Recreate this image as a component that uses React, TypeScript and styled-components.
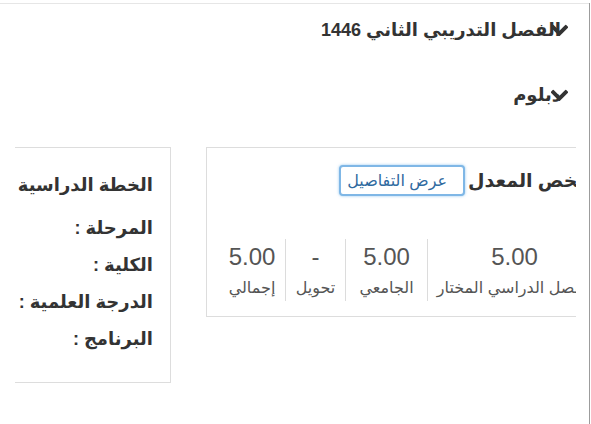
import React from "react";
import styled, { createGlobalStyle } from "styled-components";

const GlobalStyle = createGlobalStyle`
  html, body {
    margin: 0;
    padding: 0;
    background: #ffffff;
  }
  body {
    font-family: "Liberation Sans", "DejaVu Sans", sans-serif;
    color: #333333;
  }
  * { box-sizing: border-box; }
`;

const Frame = styled.div`
  width: 590px;
  height: 424px;
  border-right: 1px solid #9c9c9c;
`;

const Inner = styled.div`
  margin-top: 3px;
  border-top: 1px solid #e6e6e6;
  height: 421px;
`;

const Viewport = styled.div`
  direction: rtl;
  margin-left: 15px;
  width: 561px;
  height: 420px;
  overflow: hidden;
`;

const Section = styled.div<{ $top: number }>`
  display: flex;
  align-items: center;
  height: 22px;
  margin-top: ${(p) => p.$top}px;
  padding-right: 8px;
`;

const Chevron = styled.svg`
  position: relative;
  z-index: 1;
  width: 17px;
  height: 12px;
  flex-shrink: 0;
  fill: #333333;
`;

const SectionTitle = styled.span`
  font-size: 18px;
  font-weight: bold;
  color: #333333;
  line-height: 22px;
  margin-right: -10px;
  white-space: nowrap;
`;

const CardsRow = styled.div`
  display: flex;
  align-items: flex-start;
  gap: 35px;
  margin-top: 41px;
`;

const SummaryCard = styled.div`
  flex-shrink: 0;
  width: 400px;
  height: 170px;
  margin-right: -30px;
  border: 1px solid #dddddd;
  background: #ffffff;
`;

const SummaryHeader = styled.div`
  display: flex;
  align-items: center;
  gap: 3px;
  margin-top: 17px;
  padding-right: 8px;
  height: 31px;
`;

const SummaryTitle = styled.span`
  font-size: 19px;
  font-weight: bold;
  color: #333333;
  white-space: nowrap;
`;

const DetailsButton = styled.button`
  direction: rtl;
  height: 31px;
  padding: 0 16px 0 6px;
  border: 2px solid #7fb7e6;
  border-radius: 4px;
  box-shadow: 0 0 3px rgba(102, 175, 233, 0.7);
  background: #ffffff;
  color: #2f6aa0;
  font-family: "Liberation Sans", "DejaVu Sans", sans-serif;
  font-size: 16px;
  white-space: nowrap;
  cursor: pointer;
`;

const StatsRow = styled.div`
  display: flex;
  margin-top: 43px;
  padding-right: 4px;
`;

const Stat = styled.div<{ $w: number; $last?: boolean }>`
  width: ${(p) => p.$w}px;
  flex-shrink: 0;
  text-align: center;
  border-left: ${(p) => (p.$last ? "none" : "1px solid #dcdcdc")};
  padding-bottom: 3px;
`;

const StatValue = styled.div`
  margin-top: 6px;
  font-size: 24px;
  line-height: 24px;
  color: #555555;
  direction: ltr;
`;

const StatLabel = styled.div`
  margin-top: 9px;
  font-size: 16px;
  line-height: 20px;
  color: #555555;
  white-space: nowrap;
`;

const PlanCard = styled.div`
  flex-shrink: 0;
  width: 180px;
  height: 236px;
  border: 1px solid #dddddd;
  padding: 26px 17px 0 0;
`;

const PlanTitle = styled.div`
  font-size: 18px;
  font-weight: bold;
  line-height: 22px;
  color: #333333;
  white-space: nowrap;
`;

const PlanList = styled.div`
  display: flex;
  flex-direction: column;
  gap: 15px;
  margin-top: 21px;
`;

const PlanItem = styled.div`
  font-size: 18px;
  font-weight: bold;
  line-height: 22px;
  color: #333333;
  white-space: nowrap;
`;

const ChevronIcon = () => (
  <Chevron viewBox="115 470 1568 1100" aria-hidden="true">
    <path d="M1683 808l-742 741q-19 19-45 19t-45-19l-742-741q-19-19-19-45.5t19-45.5l166-165q19-19 45-19t45 19l531 531 531-531q19-19 45-19t45 19l166 165q19 19 19 45.5t-19 45.5z" />
  </Chevron>
);

const stats = [
  { value: "5.00", label: "الفصل الدراسي المختار", w: 174 },
  { value: "5.00", label: "الجامعي", w: 82 },
  { value: "-", label: "تحويل", w: 60 },
  { value: "5.00", label: "إجمالي", w: 66 },
];

const planItems = ["المرحلة :", "الكلية :", "الدرجة العلمية :", "البرنامج :"];

export default function App() {
  return (
    <>
      <GlobalStyle />
      <Frame>
        <Inner>
          <Viewport>
            <Section $top={15}>
              <ChevronIcon />
              <SectionTitle>الفصل التدريبي الثاني 1446</SectionTitle>
            </Section>
            <Section $top={43}>
              <ChevronIcon />
              <SectionTitle>دبلوم</SectionTitle>
            </Section>
            <CardsRow>
              <SummaryCard>
                <SummaryHeader>
                  <SummaryTitle>ملخص المعدل</SummaryTitle>
                  <DetailsButton>عرض التفاصيل</DetailsButton>
                </SummaryHeader>
                <StatsRow>
                  {stats.map((s, i) => (
                    <Stat key={i} $w={s.w} $last={i === stats.length - 1}>
                      <StatValue>{s.value}</StatValue>
                      <StatLabel>{s.label}</StatLabel>
                    </Stat>
                  ))}
                </StatsRow>
              </SummaryCard>
              <PlanCard>
                <PlanTitle>الخطة الدراسية</PlanTitle>
                <PlanList>
                  {planItems.map((t) => (
                    <PlanItem key={t}>{t}</PlanItem>
                  ))}
                </PlanList>
              </PlanCard>
            </CardsRow>
          </Viewport>
        </Inner>
      </Frame>
    </>
  );
}
